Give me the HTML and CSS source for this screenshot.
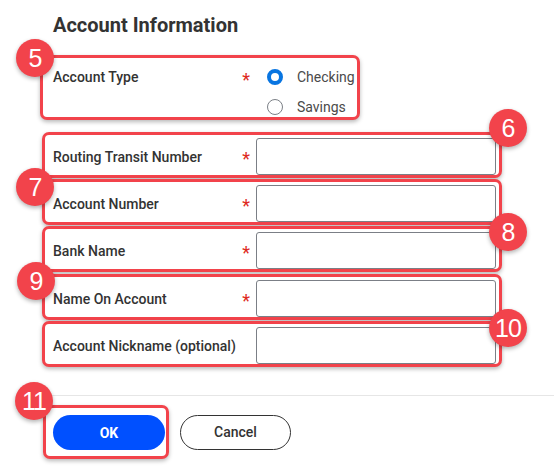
FILE: index.html
```html
<!DOCTYPE html>
<html lang="en">
<head>
<meta charset="utf-8">
<title>Account Information</title>
<link rel="stylesheet" href="styles.css">
</head>
<body>
<main class="page">
  <h2 class="title">Account Information</h2>

  <div class="anno anno-type">
    <span class="badge badge-5">5</span>
    <div class="label-cell"><span class="label">Account Type</span><span class="req">*</span></div>
    <div class="radios">
      <label class="radio"><span class="dot checked"></span><span class="radio-text">Checking</span></label>
      <label class="radio"><span class="dot"></span><span class="radio-text">Savings</span></label>
    </div>
  </div>

  <div class="fields">
    <div class="anno field">
      <span class="badge badge-right badge-6">6</span>
      <div class="label-cell"><span class="label">Routing Transit Number</span><span class="req">*</span></div>
      <div class="input"></div>
    </div>
    <div class="anno field">
      <span class="badge badge-left badge-7">7</span>
      <div class="label-cell"><span class="label">Account Number</span><span class="req">*</span></div>
      <div class="input"></div>
    </div>
    <div class="anno field">
      <span class="badge badge-right badge-8">8</span>
      <div class="label-cell"><span class="label">Bank Name</span><span class="req">*</span></div>
      <div class="input"></div>
    </div>
    <div class="anno field field-gap">
      <span class="badge badge-left badge-9">9</span>
      <div class="label-cell"><span class="label">Name On Account</span><span class="req">*</span></div>
      <div class="input"></div>
    </div>
    <div class="anno field">
      <span class="badge badge-right badge-10">10</span>
      <div class="label-cell"><span class="label">Account Nickname (optional)</span></div>
      <div class="input"></div>
    </div>
  </div>

  <div class="divider"></div>

  <div class="actions">
    <div class="anno anno-btn">
      <span class="badge badge-11">11</span>
      <button class="btn btn-primary" type="button">OK</button>
    </div>
    <button class="btn btn-secondary" type="button">Cancel</button>
  </div>
</main>
</body>
</html>
```
FILE: styles.css
```css
* { box-sizing: border-box; }

html, body {
  margin: 0;
  padding: 0;
  background: #ffffff;
}

body {
  font-family: Roboto, "Liberation Sans", Arial, sans-serif;
  color: #333333;
  width: 554px;
  height: 467px;
  overflow: hidden;
}

.page {
  padding-top: 13px;
}

.title {
  margin: 0 0 18px 53px;
  font-size: 20px;
  line-height: 24px;
  font-weight: 700;
  color: #333333;
}

/* annotation boxes */
.anno {
  position: relative;
  border: 3px solid #f2434b;
  border-radius: 7px;
  box-shadow: 0 2px 4px rgba(0, 0, 0, 0.28);
  background: #ffffff;
}

.badge {
  position: absolute;
  z-index: 2;
  width: 38px;
  height: 38px;
  border-radius: 50%;
  background: #f2434b;
  color: #ffffff;
  font-family: "Liberation Sans", Arial, sans-serif;
  font-size: 25px;
  line-height: 38px;
  text-align: center;
  box-shadow: 0 2px 4px rgba(0, 0, 0, 0.3);
  letter-spacing: -1px;
}

.badge-5 { left: -27px; top: -19px; }
.badge-right { right: -28px; }
.badge-left { left: -29px; }
.badge-6 { top: -26px; }
.badge-7 { top: -14px; }
.badge-8 { top: -16px; }
.badge-9 { top: -15px; left: -28px; }
.badge-10 { top: -15px; }
.badge-11 { left: -31px; top: -26px; }

/* label + asterisk cell */
.label-cell {
  display: flex;
  justify-content: space-between;
  align-items: center;
  width: 203px;
  padding-right: 6px;
  flex: none;
}

.label {
  font-size: 14px;
  font-weight: 500;
  color: #333333;
}

.req {
  color: #de2a21;
  font-size: 18px;
  line-height: 18px;
  height: 13px;
}

/* account type */
.anno-type {
  margin-left: 40px;
  width: 320px;
  height: 65px;
  display: flex;
  align-items: flex-start;
  padding: 9px 0 0 10px;
}

.anno-type .label-cell {
  height: 20px;
}

.radios {
  display: flex;
  flex-direction: column;
  gap: 10px;
  margin-left: 11px;
}

.radio {
  display: flex;
  align-items: center;
  height: 20px;
  gap: 14px;
}

.dot {
  width: 16px;
  height: 16px;
  border-radius: 50%;
  border: 1px solid #7b7f86;
  background: #ffffff;
  flex: none;
}

.dot.checked {
  border: 4.5px solid #0875e1;
}

.radio-text {
  font-size: 14px;
  color: #4a4a4a;
}

/* fields */
.fields {
  margin: 12px 0 0 42px;
  width: 460px;
  display: flex;
  flex-direction: column;
  gap: 1px;
}

.field {
  display: flex;
  align-items: center;
  height: 46px;
  padding: 3px 3px 0 8px;
}

.field-gap {
  margin-top: 1px;
}

.input {
  width: 240px;
  height: 37px;
  border: 1px solid #7b7f86;
  border-radius: 3px;
  background: #ffffff;
  flex: none;
}

.divider {
  margin: 28px 0 0 40px;
  height: 1px;
  background: #e6e6e6;
}

/* actions */
.actions {
  display: flex;
  align-items: center;
  margin: 9px 0 0 43px;
}

.anno-btn {
  width: 126px;
  height: 54px;
  padding: 7px 1px 6px 7px;
}

.btn {
  height: 35px;
  border-radius: 18px;
  font-family: Roboto, "Liberation Sans", Arial, sans-serif;
  font-size: 14px;
  font-weight: 500;
  cursor: pointer;
}

.btn-primary {
  width: 112px;
  background: #0050ff;
  border: none;
  color: #ffffff;
  font-weight: 700;
}

.btn-secondary {
  width: 111px;
  margin-left: 11px;
  background: #ffffff;
  border: 1px solid #333333;
  color: #333333;
}
```
